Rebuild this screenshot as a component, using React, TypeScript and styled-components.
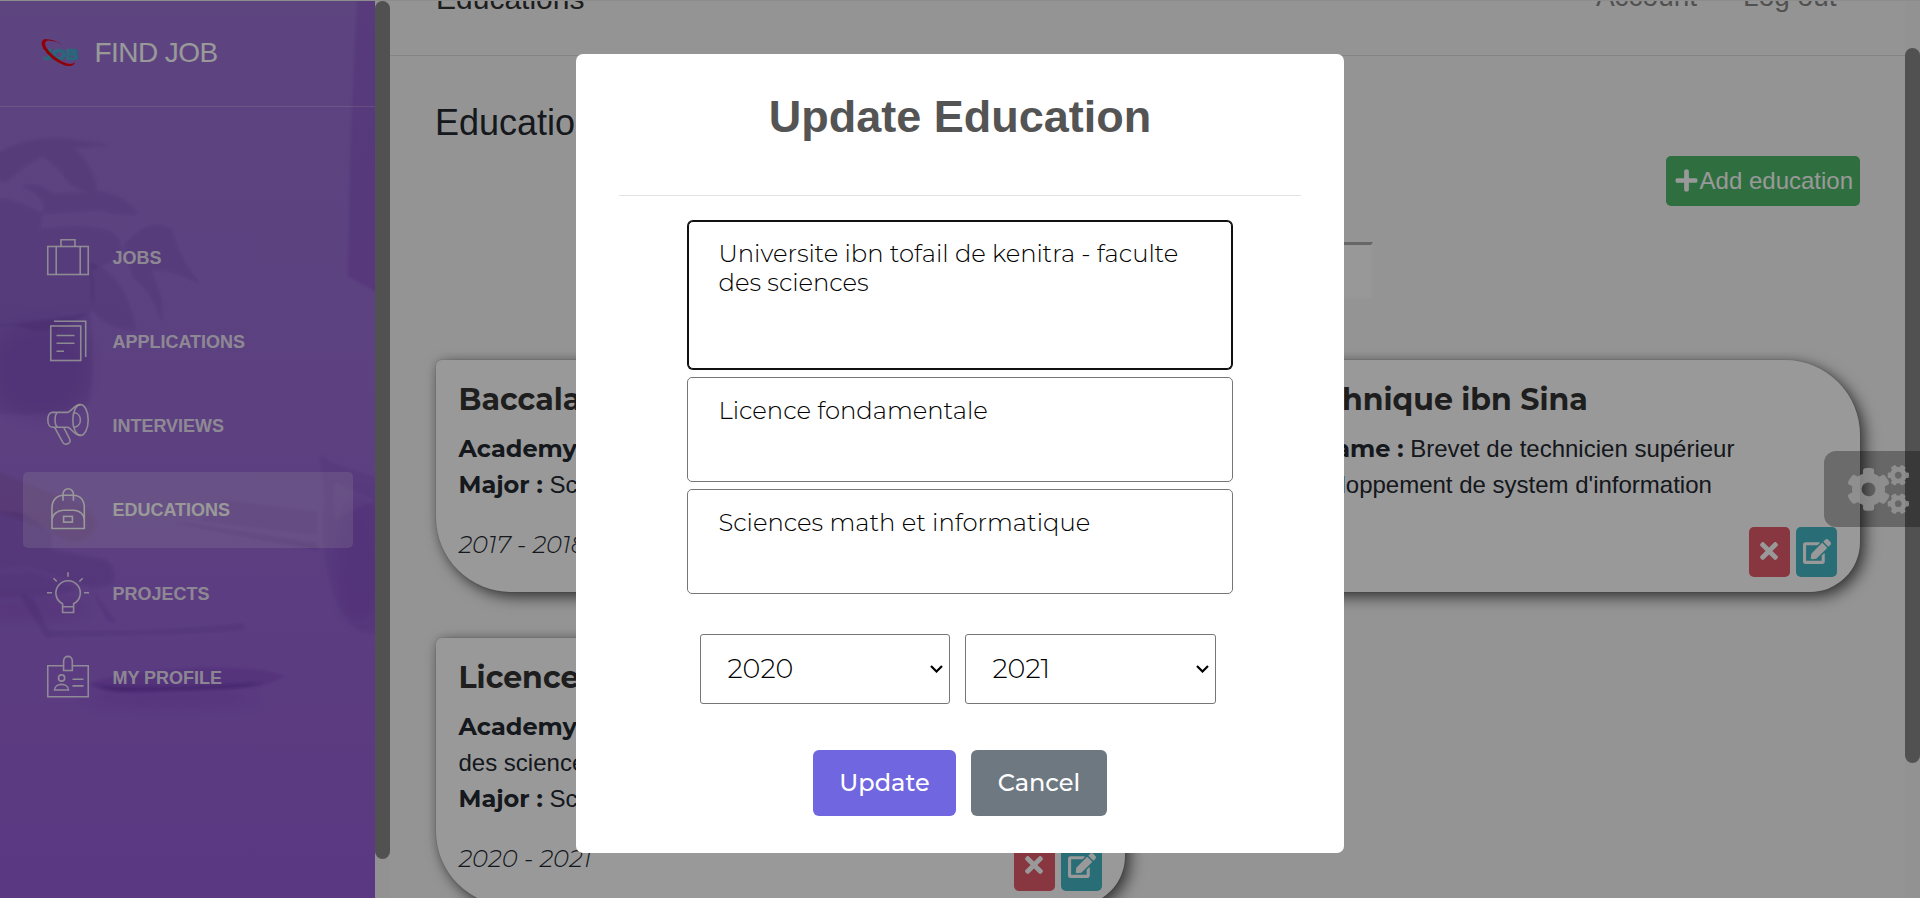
import React from "react";
import styled, { createGlobalStyle, css } from "styled-components";
import { FaCogs, FaEdit, FaPlus, FaTimes } from "react-icons/fa";

const sans = `"Liberation Sans", Arial, sans-serif`;
const display = `Montserrat, Inter, sans-serif`;

const GlobalStyle = createGlobalStyle`
  *, *::before, *::after { box-sizing: border-box; }
  body { margin: 0; overflow: hidden; font-family: ${sans}; font-size: 24px; color: #23282f; }
  button, textarea, select { font: inherit; margin: 0; }
`;

const Page = styled.div`
  position: relative;
  display: flex;
  width: 1920px;
  height: 898px;
  overflow: hidden;
  border-top: 1px solid #8c8c8c;
  background: #f7f7f7;
`;

const Sidebar = styled.aside`
  position: relative;
  flex: 0 0 375px;
  height: 897px;
  overflow: hidden;
  color: #fff;
  background: linear-gradient(180deg, #9b73d6 0%, #9a6bd6 50%, #985ed9 100%);
`;

const Photo = styled.svg`
  position: absolute;
  inset: 0;
`;

const SidebarContent = styled.div`
  position: relative;
`;

const Brand = styled.div`
  display: flex;
  align-items: center;
  height: 106px;
  padding: 0 0 1px 40px;
  border-bottom: 1px solid rgba(255, 255, 255, 0.22);
  font-size: 28px;
  letter-spacing: -0.55px;
  line-height: 36px;
`;

const BrandMark = styled.svg`
  width: 40px;
  height: 32px;
  margin-right: 14.5px;
`;

const Nav = styled.nav`
  display: flex;
  flex-direction: column;
  gap: 8px;
  padding: 113px 22px 0 23px;
`;

const NavItem = styled.a<{ $active?: boolean }>`
  display: flex;
  align-items: center;
  gap: 23px;
  height: 76px;
  padding-left: 24.4px;
  border-radius: 5px;
  font-size: 18px;
  font-weight: 700;
  color: ${(p) => (p.$active ? "#fff" : "rgba(255,255,255,.84)")};
  background: ${(p) => (p.$active ? "rgba(255,255,255,.2)" : "transparent")};

  svg {
    width: 42px;
    height: 42px;
    overflow: visible;
    fill: none;
    stroke: currentColor;
    stroke-width: 1.6;
  }
`;

const ScrollTrack = styled.div<{ $start: number }>`
  flex: 0 0 15px;
  height: 897px;
  padding-top: ${(p) => p.$start}px;
  background: #f3f3f3;
`;

const ScrollThumb = styled.div<{ $size: number }>`
  height: ${(p) => p.$size}px;
  border-radius: 8px;
  background: #888;
`;

const Main = styled.main`
  flex: 1;
  min-width: 0;
  height: 897px;
  overflow: hidden;
`;

const TopBar = styled.header`
  display: flex;
  justify-content: space-between;
  height: 55px;
  padding: 0 68.5px 0 46px;
  overflow: hidden;
  border-bottom: 1px solid #dcdcdc;
`;

const TopTitle = styled.span`
  margin-top: -17px;
  font-size: 30px;
  line-height: 30px;
  color: #333;
`;

const TopLinks = styled.div`
  display: flex;
  gap: 46px;
  margin-top: -19px;
  font-size: 28px;
  line-height: 30px;
  color: #888;
`;

const Content = styled.section`
  padding: 45px 45px 0 46px;
`;

const PageTitle = styled.h3`
  margin: 0;
  font-size: 36px;
  font-weight: 400;
  line-height: 43px;
  text-indent: -1px;
`;

const ActionRow = styled.div`
  display: flex;
  justify-content: flex-end;
  margin-top: 12px;
`;

const AddButton = styled.button`
  display: flex;
  align-items: center;
  gap: 1.6px;
  width: 194px;
  height: 50px;
  padding: 0 0 0 9px;
  border: 0;
  border-radius: 5px;
  font-size: 24px;
  line-height: 24px;
  color: #fff;
  background: #4eb869;
  white-space: nowrap;

  svg { width: 23px; height: 25px; margin-top: -2px; flex: none; }
`;

const SearchRow = styled.div`
  display: flex;
  justify-content: center;
  margin: 36px 0 61px;
`;

const SearchInput = styled.input`
  width: 450px;
  height: 57px;
  border: 2px solid #fbfbfb;
  border-top: 3px solid #aaa;
  background: #fdfdfd;
`;

const CardGrid = styled.div`
  display: grid;
  grid-template-columns: 1fr 1fr;
  gap: 46px;
`;

const Card = styled.article`
  display: flex;
  flex-direction: column;
  padding: 21px 23px 15px 22.5px;
  border-radius: 6px 75px 50px 75px;
  background: #fff;
  box-shadow: 5px 5px 15px rgba(0, 0, 0, 0.62), 0 0 10px rgba(0, 0, 0, 0.12), 0 0 0 1px rgba(0, 0, 0, 0.05);
`;

const CardTitle = styled.h4`
  margin: 0 0 12px;
  font: 700 30px/38px ${display};
  color: #333;
  white-space: nowrap;
`;

const CardText = styled.div`
  line-height: 36px;
`;

const Label = styled.b`
  font: 700 24px/1 ${display};
`;

const CardFooter = styled.div`
  display: flex;
  align-items: flex-start;
  gap: 6px;
  height: 50px;
  margin-top: 24px;
`;

const Years = styled.span`
  flex: 1;
  font: italic 300 24.3px/34px ${display};
`;

const IconButton = styled.button<{ $tone: "danger" | "info" }>`
  display: flex;
  align-items: center;
  justify-content: center;
  width: 41px;
  height: 50px;
  padding: 0 ${(p) => (p.$tone === "danger" ? 1 : 0)}px 2px 0;
  border: 0;
  border-radius: 5px;
  color: #fff;
  background: ${(p) => (p.$tone === "danger" ? "#e35b6b" : "#45b7c6")};

  svg { ${(p) => (p.$tone === "danger" ? css`width: 18px; height: 26px;` : css`width: 28px; height: 25px;`)} }
`;

const SettingsTab = styled.div`
  position: absolute;
  top: 450px;
  right: 0;
  display: flex;
  align-items: center;
  width: 96px;
  height: 76px;
  padding-left: 24px;
  border-radius: 12px 0 0 12px;
  color: rgba(255, 255, 255, 0.78);
  background: rgba(0, 0, 0, 0.3);

  svg { width: 61px; height: 49px; }
`;

const Backdrop = styled.div`
  position: absolute;
  inset: -1px 0 0;
  display: flex;
  justify-content: center;
  align-items: flex-start;
  padding-top: 54px;
  background: rgba(0, 0, 0, 0.4);
`;

const Dialog = styled.div`
  width: 768px;
  height: 799px;
  padding: 35px 43px 0;
  border-radius: 7px;
  background: #fff;
`;

const DialogTitle = styled.h2`
  margin: 0;
  padding-bottom: 51px;
  border-bottom: 1px solid #e3e3e3;
  font-size: 45px;
  font-weight: 700;
  line-height: 55px;
  text-align: center;
  color: #545454;
`;

const Fields = styled.div`
  display: flex;
  flex-direction: column;
  gap: 7px;
  padding: 25px 68px 0;
`;

const Field = styled.textarea<{ $focused?: boolean }>`
  display: block;
  width: 546px;
  height: 105px;
  padding: 18px 30.5px;
  border: 1px solid #767676;
  border-radius: 5px;
  resize: none;
  overflow: hidden;
  font: 300 24.3px/29px ${display};
  color: #000;
  background: #fff;
  outline: none;

  ${(p) =>
    p.$focused &&
    css`
      width: 544px;
      height: 148px;
      margin: 0 1px 1px;
      padding: 17px 29.5px;
      border-color: #101010;
      box-shadow: 0 0 0 1px #101010;
    `}
`;

const YearRow = styled.div`
  display: flex;
  gap: 15px;
  margin: 40px 0 0 81px;
`;

const YearBox = styled.div`
  display: flex;
  align-items: center;
  justify-content: space-between;
  width: 250px;
  height: 70px;
  padding: 0 6.5px 1px 26.5px;
  border: 1px solid #767676;
  border-radius: 3px;
  font: 300 27px/1 ${display};
  color: #000;

  & + & { width: 251px; }

  svg { width: 13px; height: 8px; fill: none; stroke: #000; stroke-width: 2.2; }
`;

const DialogActions = styled.div`
  display: flex;
  justify-content: center;
  gap: 15px;
  margin-top: 46px;
`;

const DialogButton = styled.button<{ $primary?: boolean }>`
  width: ${(p) => (p.$primary ? 143 : 136)}px;
  height: 66px;
  padding: 0;
  border: 0;
  border-radius: 6px;
  font: 500 24px/1 ${display};
  color: #fff;
  background: ${(p) => (p.$primary ? "#7066e0" : "#6e7881")};
`;

const icons: Record<string, React.ReactNode> = {
  jobs: (
    <>
      <rect x="0.75" y="9.5" width="40.5" height="28" />
      <path d="M14 9.5V2.75H28V9.5M9.2 9.5V37.5M33.2 9.5V37.5" />
    </>
  ),
  applications: (
    <>
      <rect x="3.75" y="5" width="30" height="34.5" />
      <path d="M7 0.2H38.7V36M9.5 14.5H27.5M9.5 22.3H27.5M9.5 30.3H17" />
    </>
  ),
  interviews: (
    <>
      <ellipse cx="33.5" cy="15" rx="7.7" ry="15.4" />
      <path d="M33.5 -0.4C27 -0.4 23.5 7.4 20.5 7.4H5.2C-0.6 7.4 -0.6 22.3 5.2 22.3H20.5C24 22.3 26.5 30.4 33.5 30.4M10.6 7.4C7.2 9.5 7.2 20.2 10.6 22.3M27 7.8C35.5 8.5 35.5 21.5 27 22.2M7.6 22.3L15.8 37.3C18.2 41.2 24.2 38.4 22.8 34.2L16.7 22.3" />
    </>
  ),
  educations: (
    <>
      <path d="M5 39.5V18.5C5 11 10 6.3 16.5 6.3H26.5C33 6.3 37.3 11 37.3 18.5V39.5ZM5 32C5 25 10.5 21.3 16.5 21.3H26.5C32.5 21.3 37.3 25 37.3 32M16 11.8V5A5.2 5.2 0 0 1 26.4 5V11.8" />
      <rect x="16.6" y="27.4" width="8.8" height="5.7" />
    </>
  ),
  projects: (
    <>
      <path d="M15.6 30.8A12.2 12.2 0 1 1 26.6 30.8V39.5H15.6ZM15.6 33.8H26.6" />
      <path d="M21 -0.7V3.7M6.5 5.3L9.8 8.5M35.7 5.3L32.4 8.5M0 19.8H5M37 19.8H42" />
    </>
  ),
  profile: (
    <>
      <path d="M16.6 8.8H0.75V39.7H41.25V8.8H25.3M16.6 13.5V4C16.6 -2.2 25.3 -2.2 25.3 4V13.5ZM25.5 22.3H36.5M25.5 28.9H36.5M7.5 33C7.5 25.5 21.5 25.5 21.5 33Z" />
      <circle cx="14.6" cy="21" r="3.1" />
    </>
  ),
};

const links: [string, string][] = [
  ["jobs", "JOBS"],
  ["applications", "APPLICATIONS"],
  ["interviews", "INTERVIEWS"],
  ["educations", "EDUCATIONS"],
  ["projects", "PROJECTS"],
  ["profile", "MY PROFILE"],
];

function DeskPhoto() {
  return (
    <Photo width="375" height="897" viewBox="0 1 375 897">
      <defs>
        <filter id="soft" x="-20%" y="-20%" width="140%" height="140%">
          <feGaussianBlur stdDeviation="1.8" />
        </filter>
        <filter id="softer" x="-30%" y="-30%" width="160%" height="160%">
          <feGaussianBlur stdDeviation="8" />
        </filter>
      </defs>
      <g filter="url(#soft)" fill="#4b1f93">
        <path d="M358 -10H385V297L348 276Q350 100 358 -10Z" fillOpacity="0.14" />
        <g fillOpacity="0.15">
          <path d="M-5 155Q22 138 60 138L110 145L74 148Q98 172 96 194Q70 190 62 172Q50 160 42 156Q20 168 6 182L-5 178Z" />
          <path d="M22 186Q40 182 52 194L102 192Q125 196 138 214Q120 216 100 210L42 214Q50 198 22 186Z" />
          <path d="M-5 198Q20 200 42 214L40 230Q80 222 112 232Q122 240 122 258Q108 262 92 270Q96 290 92 310Q60 335 32 330Q12 322 -5 328Z" />
          <path d="M124 246Q150 215 172 230Q180 262 200 284Q170 268 150 270Q165 300 162 322Q152 290 134 278Z" />
          <path d="M-5 325Q40 322 90 312Q95 370 88 404Q50 418 -5 412Z" />
          <path d="M90 262Q125 275 136 330Q105 328 92 310Z" />
        </g>
        <path d="M-5 470Q40 490 82 506Q100 520 96 528Q82 546 66 540Q30 520 -5 512Z" fill="#7f3b70" fillOpacity="0.16" />
        <path d="M-5 510L25 513L52 535V550L105 560Q118 568 112 585L92 588Q65 580 30 568L-5 570Z" fillOpacity="0.16" />
        <path d="M-5 572L30 570L78 588Q65 596 -5 598Z" fillOpacity="0.16" />
        <path d="M20 594L32 598L48 631Q150 634 244 624V630L180 633L46 637Z" fillOpacity="0.16" />
        <path d="M90 587L116 622L108 622Z" fillOpacity="0.12" />
        <path d="M168 521L318 544V550Q240 535 168 521Z" fillOpacity="0.2" />
        <path d="M222 500L317 512V535L200 520Z" fillOpacity="0.08" />
        <path d="M320 454L330 462L385 480V504L334 482V520L385 495V634Q344 638 333 590Q318 540 325 502Z" fillOpacity="0.08" />
        <path d="M85 684Q130 670 200 667Q260 666 286 676Q270 684 258 687Q160 693 110 691Z" fillOpacity="0.13" />
        <path d="M92 685Q165 690 264 682Q250 688 225 689L120 692Q102 690 92 685Z" fillOpacity="0.35" />
      </g>
      <g filter="url(#softer)" fill="#4b1f93" fillOpacity="0.11">
        <ellipse cx="40" cy="370" rx="52" ry="50" />
        <ellipse cx="30" cy="608" rx="60" ry="12" />
        <ellipse cx="170" cy="698" rx="90" ry="10" />
        <ellipse cx="360" cy="560" rx="24" ry="64" />
      </g>
    </Photo>
  );
}

function Logo() {
  return (
    <BrandMark viewBox="40 38 40 32">
      <text x="43.6" y="60.6" fontFamily={display} fontWeight="800" fontSize="17" textLength="34.5" lengthAdjust="spacingAndGlyphs" fill="#45aecb" stroke="#45aecb" strokeWidth="0.5">JOB</text>
      <path d="M63 46Q54 40 45 40Q39 42 43.5 50Q51 61 64 66.2Q74 69 75 63Q71 67 62 62.6Q51 56 46.3 48.5Q43 42 49 41.6Q56 42 63 46Z" fill="#f00010" />
    </BrandMark>
  );
}

function Chevron() {
  return (
    <svg viewBox="0 0 13 8">
      <path d="M1 1L6.5 6.5L12 1" />
    </svg>
  );
}

type Education = { title: string; academy: string; major: string; years: string };

const educations: Education[] = [
  { title: "Baccalauréat", academy: "Sciences physiques", major: "Sciences", years: "2017 - 2018" },
  { title: "Lycée technique ibn Sina", academy: "Brevet de technicien supérieur", major: "Développement de system d'information", years: "2018 - 2020" },
  { title: "Licence fondamentale", academy: "Universite ibn tofail de kenitra - faculte des sciences", major: "Sciences math et informatique", years: "2020 - 2021" },
];

function EducationCard({ title, academy, major, years }: Education) {
  return (
    <Card>
      <CardTitle>{title}</CardTitle>
      <CardText><Label>Academy name :</Label> {academy}</CardText>
      <CardText><Label>Major :</Label> {major}</CardText>
      <CardFooter>
        <Years>{years}</Years>
        <IconButton $tone="danger" aria-label="Delete"><FaTimes /></IconButton>
        <IconButton $tone="info" aria-label="Edit"><FaEdit /></IconButton>
      </CardFooter>
    </Card>
  );
}

export default function App() {
  return (
    <>
      <GlobalStyle />
      <Page>
        <Sidebar>
          <DeskPhoto />
          <SidebarContent>
            <Brand><Logo />FIND JOB</Brand>
            <Nav>
              {links.map(([icon, label]) => (
                <NavItem key={icon} $active={icon === "educations"}>
                  <svg viewBox="0 0 42 42">{icons[icon]}</svg>
                  {label}
                </NavItem>
              ))}
            </Nav>
          </SidebarContent>
        </Sidebar>
        <ScrollTrack $start={0}><ScrollThumb $size={858} /></ScrollTrack>
        <Main>
          <TopBar>
            <TopTitle>Educations</TopTitle>
            <TopLinks><span>Account</span><span>Log out</span></TopLinks>
          </TopBar>
          <Content>
            <PageTitle>Educations</PageTitle>
            <ActionRow><AddButton><FaPlus />Add education</AddButton></ActionRow>
            <SearchRow><SearchInput aria-label="Search" /></SearchRow>
            <CardGrid>
              {educations.map((e) => <EducationCard key={e.title} {...e} />)}
            </CardGrid>
          </Content>
        </Main>
        <ScrollTrack $start={47}><ScrollThumb $size={715} /></ScrollTrack>
        <SettingsTab><FaCogs /></SettingsTab>
        <Backdrop>
          <Dialog role="dialog">
            <DialogTitle>Update Education</DialogTitle>
            <Fields>
              <Field $focused readOnly value="Universite ibn tofail de kenitra - faculte des sciences" />
              <Field readOnly value="Licence fondamentale" />
              <Field readOnly value="Sciences math et informatique" />
            </Fields>
            <YearRow>
              <YearBox>2020<Chevron /></YearBox>
              <YearBox>2021<Chevron /></YearBox>
            </YearRow>
            <DialogActions>
              <DialogButton $primary>Update</DialogButton>
              <DialogButton>Cancel</DialogButton>
            </DialogActions>
          </Dialog>
        </Backdrop>
      </Page>
    </>
  );
}
